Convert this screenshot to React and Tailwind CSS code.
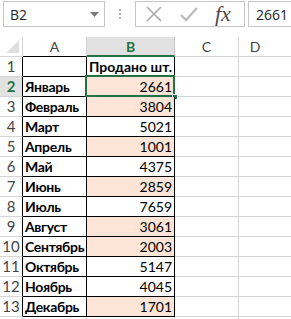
import React from 'react';

const rows = [
  ['Январь', 2661],
  ['Февраль', 3804],
  ['Март', 5021],
  ['Апрель', 1001],
  ['Май', 4375],
  ['Июнь', 2859],
  ['Июль', 7659],
  ['Август', 3061],
  ['Сентябрь', 2003],
  ['Октябрь', 5147],
  ['Ноябрь', 4045],
  ['Декабрь', 1701],
];

const cellFont = { fontFamily: 'Lato, "Liberation Sans", sans-serif' };

function Toolbar() {
  return (
    <div className="flex items-start h-[37px] pt-[1px] pl-[3px]" style={{ fontFamily: '"Open Sans", "Liberation Sans", sans-serif' }}>
      {/* name box */}
      <div className="w-[102px] h-[26px] border border-[#c6c6c6] flex items-center justify-between pl-[6px] pr-[5px]">
        <span className="text-[14px] text-[#222]">B2</span>
        <svg width="9" height="5" viewBox="0 0 9 5">
          <polygon points="0,0 9,0 4.5,5" fill="#7a7a7a" />
        </svg>
      </div>
      {/* dots */}
      <div className="w-[30px] h-[26px] flex flex-col items-center justify-center gap-[2px]">
        <span className="w-[2px] h-[2px] bg-[#b5b5b5]" />
        <span className="w-[2px] h-[2px] bg-[#b5b5b5]" />
        <span className="w-[2px] h-[2px] bg-[#b5b5b5]" />
      </div>
      {/* cancel / enter / fx */}
      <div className="w-[110px] h-[26px] border border-[#c6c6c6] flex items-center">
        <svg className="ml-[10px]" width="16" height="16" viewBox="0 0 16 16">
          <path d="M1 1 L15 15 M15 1 L1 15" stroke="#a9a9a9" strokeWidth="1.6" fill="none" />
        </svg>
        <svg className="ml-[18px]" width="18" height="16" viewBox="0 0 18 16">
          <path d="M1 9 L6 14 L17 2" stroke="#bdbdbd" strokeWidth="2.4" fill="none" />
        </svg>
        <span
          className="ml-[17px] text-[22px] italic text-[#4a4a4a] leading-none"
          style={{ fontFamily: '"Liberation Serif", "DejaVu Serif", serif' }}
        >
          fx
        </span>
      </div>
      {/* formula input */}
      <div className="ml-[3px] flex-1 h-[26px] border border-[#c6c6c6] border-r-0 flex items-center pl-[7px]">
        <span className="text-[14px] text-[#222]">2661</span>
      </div>
    </div>
  );
}

function HeaderRow() {
  return (
    <div className="flex h-[20px] text-[14px] text-[#444]" style={cellFont}>
      <div className="w-[23px] shrink-0 border-r border-b border-[#d4d4d4] relative">
        <svg className="absolute right-[3px] bottom-[3px]" width="13" height="13" viewBox="0 0 13 13">
          <polygon points="13,0 13,13 0,13" fill="#dfdfdf" />
        </svg>
      </div>
      <div className="w-[64px] shrink-0 border-r border-b border-r-[#d4d4d4] border-b-black flex items-center justify-center">A</div>
      <div className="w-[88px] shrink-0 bg-[#e1e1e1] border-r border-r-[#c6c6c6] border-b-2 border-b-[#217346] flex items-center justify-center font-bold text-[#217346]">B</div>
      <div className="w-[64px] shrink-0 border-r border-b border-[#d4d4d4] flex items-center justify-center">C</div>
      <div className="flex-1 border-b border-[#d4d4d4] flex items-center justify-center pr-[20px]">D</div>
    </div>
  );
}

function DataRow({ n, name, value, header }) {
  const selected = n === 2;
  const pink = value !== null && value < 4000;
  return (
    <div className="flex h-[20px] text-[14px]" style={cellFont}>
      <div
        className={
          selected
            ? 'w-[23px] shrink-0 bg-[#e1e1e1] border-r border-b border-r-black border-b-[#d4d4d4] flex items-center justify-center font-bold text-[#217346] text-[15px]'
            : 'w-[23px] shrink-0 border-r border-b border-r-black border-b-[#d4d4d4] flex items-center justify-center text-[#444] text-[15px]'
        }
      >
        {n}
      </div>
      <div className="w-[64px] shrink-0 border-r border-b border-black flex items-center pl-[2px] font-bold text-black whitespace-nowrap overflow-hidden tracking-[-0.3px]">
        {name}
      </div>
      <div
        className={
          header
            ? 'w-[88px] shrink-0 border-r border-b border-black flex items-center pl-[2px] font-bold text-black whitespace-nowrap'
            : pink
            ? 'w-[88px] shrink-0 bg-[#fce4d6] border-r border-b border-black flex items-center justify-end pr-[2px] text-black relative'
            : 'w-[88px] shrink-0 border-r border-b border-black flex items-center justify-end pr-[2px] text-black relative'
        }
      >
        {header}
        {!header && value}
        {selected && (
          <>
            <div className="absolute -left-[2px] -top-[2px] -right-[1px] -bottom-[1px] border-2 border-[#217346]" />
            <div className="absolute -right-[4px] -bottom-[4px] w-[6px] h-[6px] bg-[#217346] border border-white" />
          </>
        )}
      </div>
      <div className="w-[64px] shrink-0 border-r border-b border-[#d4d4d4]" />
      <div className="flex-1 border-b border-[#d4d4d4]" />
    </div>
  );
}

export default function App() {
  return (
    <div className="w-[291px] h-[319px] overflow-hidden bg-white">
      <Toolbar />
      <HeaderRow />
      <DataRow n={1} name="" value={null} header="Продано шт." />
      {rows.map(([name, value], i) => (
        <DataRow key={name} n={i + 2} name={name} value={value} />
      ))}
      <div className="flex h-[20px]">
        <div className="w-[23px] shrink-0 border-r border-[#d4d4d4]" />
        <div className="w-[64px] shrink-0 border-r border-[#d4d4d4]" />
        <div className="w-[88px] shrink-0 border-r border-[#d4d4d4]" />
        <div className="w-[64px] shrink-0 border-r border-[#d4d4d4]" />
        <div className="flex-1" />
      </div>
    </div>
  );
}
